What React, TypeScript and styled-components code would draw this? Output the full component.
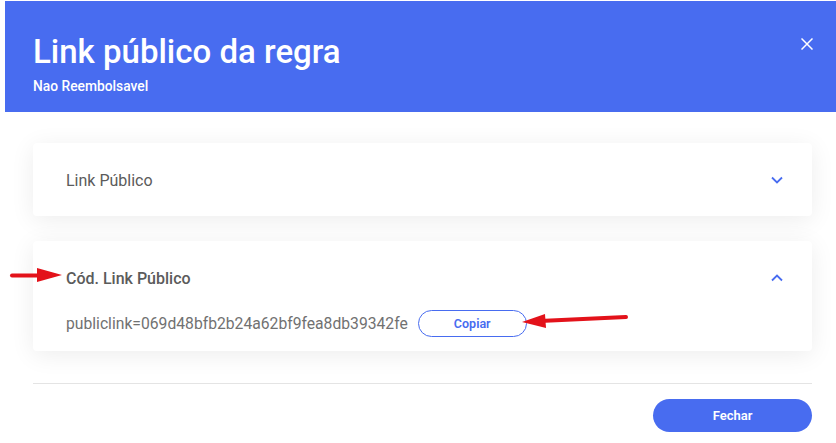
import styled, { createGlobalStyle } from "styled-components"

const GlobalStyle = createGlobalStyle`
  html, body {
    margin: 0;
    padding: 0;
    background: #ffffff;
    overflow: hidden;
  }
  * { box-sizing: border-box; }
`

const BLUE = "#486cf0"
const RED = "#e3121a"

const Page = styled.div`
  position: relative;
  width: 836px;
  height: 443px;
  padding: 1px 0 0 5px;
  font-family: Roboto, "Liberation Sans", sans-serif;
`

const Modal = styled.div`
  width: 831px;
  background: #ffffff;
`

const Header = styled.header`
  background: ${BLUE};
  height: 111px;
  padding: 31px 23px 0 28px;
  display: flex;
  justify-content: space-between;
  align-items: flex-start;
  color: #ffffff;
`

const Title = styled.h1`
  margin: 0;
  font-size: 33px;
  line-height: 40px;
  font-weight: 500;
`

const Subtitle = styled.div`
  margin-top: 6px;
  font-size: 13.8px;
  line-height: 16px;
  font-weight: 500;
`

const CloseButton = styled.button`
  border: 0;
  background: transparent;
  padding: 0;
  margin-top: 6px;
  width: 12px;
  height: 12px;
  display: flex;
  cursor: pointer;
`

const Body = styled.div`
  padding: 31px 24px 0 28px;
  display: flex;
  flex-direction: column;
`

const Card = styled.section<{ $open: boolean }>`
  background: #ffffff;
  border-radius: 4px;
  box-shadow: 0 4px 24px rgba(0, 0, 0, 0.075);
  padding: 28px 29px ${({ $open }) => ($open ? "14px" : "27px")} 33px;
  & + & { margin-top: 25px; }
`

const CardHead = styled.div`
  display: flex;
  align-items: center;
  justify-content: space-between;
  height: 18px;
`

const CardTitle = styled.span<{ $open: boolean }>`
  font-size: 16px;
  font-weight: ${({ $open }) => ($open ? 500 : 400)};
  color: #5b5b5b;
`

const CardContent = styled.div`
  margin-top: 23px;
  display: flex;
  align-items: center;
  height: 27px;
`

const LinkText = styled.span`
  font-size: 15.7px;
  color: #717171;
`

const OutlineButton = styled.button`
  margin-left: 10px;
  width: 109px;
  height: 27px;
  border: 1px solid ${BLUE};
  border-radius: 14px;
  background: #ffffff;
  color: ${BLUE};
  font-family: inherit;
  font-size: 12.5px;
  font-weight: 600;
  cursor: pointer;
`

const Divider = styled.hr`
  margin: 32px 0 0;
  border: 0;
  border-top: 1px solid #e4e4e4;
`

const Footer = styled.div`
  display: flex;
  justify-content: flex-end;
  margin-top: 15px;
`

const PrimaryButton = styled.button`
  width: 159px;
  height: 33px;
  border: 0;
  border-radius: 17px;
  background: ${BLUE};
  color: #ffffff;
  font-family: inherit;
  font-size: 13px;
  font-weight: 600;
  cursor: pointer;
`

const Annotation = styled.svg`
  position: absolute;
  left: 0;
  top: 0;
  pointer-events: none;
`

const Chevron = ({ up }: { up?: boolean }) => (
  <svg width="12" height="8" viewBox="0 0 12 8" fill="none">
    <path
      d={up ? "M1 6.5 L6 1.5 L11 6.5" : "M1 1.5 L6 6.5 L11 1.5"}
      stroke={BLUE}
      strokeWidth="1.8"
    />
  </svg>
)

export default function App() {
  return (
    <>
      <GlobalStyle />
      <Page>
        <Modal>
          <Header>
            <div>
              <Title>Link público da regra</Title>
              <Subtitle>Nao Reembolsavel</Subtitle>
            </div>
            <CloseButton aria-label="Fechar">
              <svg width="12" height="12" viewBox="0 0 12 12">
                <path d="M0.5 0.5 L11.5 11.5 M11.5 0.5 L0.5 11.5" stroke="#fff" strokeWidth="1.5" />
              </svg>
            </CloseButton>
          </Header>
          <Body>
            <Card $open={false}>
              <CardHead>
                <CardTitle $open={false}>Link Público</CardTitle>
                <Chevron />
              </CardHead>
            </Card>
            <Card $open={true}>
              <CardHead>
                <CardTitle $open={true}>Cód. Link Público</CardTitle>
                <Chevron up />
              </CardHead>
              <CardContent>
                <LinkText>publiclink=069d48bfb2b24a62bf9fea8db39342fe</LinkText>
                <OutlineButton>Copiar</OutlineButton>
              </CardContent>
            </Card>
            <Divider />
            <Footer>
              <PrimaryButton>Fechar</PrimaryButton>
            </Footer>
          </Body>
        </Modal>
        <Annotation width="836" height="443" viewBox="0 0 836 443">
          <path d="M12 275.5 L42 275.5" stroke={RED} strokeWidth="4" strokeLinecap="round" />
          <polygon points="37,268 62,275 37,282" fill={RED} />
          <path d="M626 317 L540 321" stroke={RED} strokeWidth="4" strokeLinecap="round" />
          <polygon points="545,314 522,322 546,328" fill={RED} />
        </Annotation>
      </Page>
    </>
  )
}
